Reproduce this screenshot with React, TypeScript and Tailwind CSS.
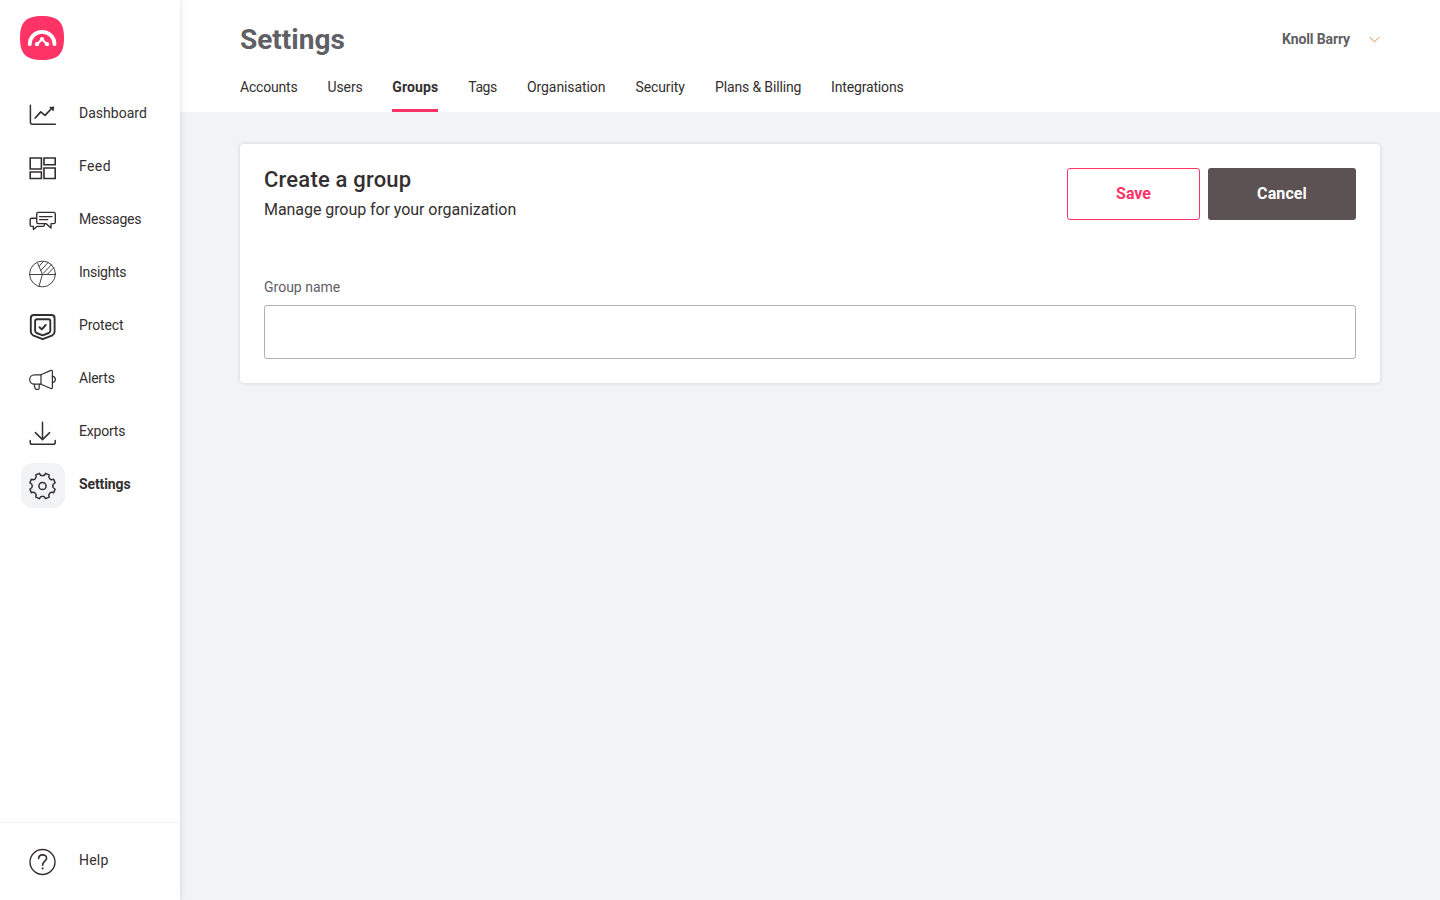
import type { ReactNode } from 'react';

const navItems = [
  { label: 'Dashboard', icon: <DashboardIcon />, tracking: 'tracking-[0.02px]' },
  { label: 'Feed', icon: <FeedIcon />, tracking: 'tracking-[0.4px]' },
  { label: 'Messages', icon: <MessagesIcon />, tracking: 'tracking-[-0.25px]' },
  { label: 'Insights', icon: <InsightsIcon />, tracking: 'tracking-[-0.28px]' },
  { label: 'Protect', icon: <ProtectIcon />, tracking: 'tracking-[-0.12px]' },
  { label: 'Alerts', icon: <AlertsIcon />, tracking: 'tracking-[-0.2px]' },
  { label: 'Exports', icon: <ExportsIcon />, tracking: 'tracking-[-0.2px]' },
  { label: 'Settings', icon: <SettingsIcon />, tracking: 'tracking-[-0.1px]', active: true },
];

const tabs = [
  { label: 'Accounts', width: 'w-[57.5px] tracking-[-0.2px]' },
  { label: 'Users', width: 'w-[34.8px] tracking-[-0.1px]' },
  { label: 'Groups', width: 'w-[46px] tracking-[0.12px]', active: true },
  { label: 'Tags', width: 'w-[28.7px] tracking-[-0.45px]' },
  { label: 'Organisation', width: 'w-[78.5px] tracking-[-0.08px]' },
  { label: 'Security', width: 'w-[49.5px] tracking-[-0.1px]' },
  { label: 'Plans & Billing', width: 'w-[86px] tracking-[-0.14px]' },
  { label: 'Integrations', width: 'w-[73px] tracking-[-0.15px]' },
];

function Icon({ children, stroke = 1.2 }: { children: ReactNode; stroke?: number }) {
  return (
    <svg
      width="44"
      height="45"
      viewBox="0 0 44 45"
      fill="none"
      stroke="#332f30"
      strokeWidth={stroke}
      strokeLinecap="round"
      strokeLinejoin="round"
    >
      {children}
    </svg>
  );
}

function DashboardIcon() {
  return (
    <Icon stroke={1.5}>
      <path d="M9.4 13.2V30.2Q9.4 32.2 11.4 32.2H34.3" />
      <path d="M14.2 26L19.7 19.9L24 23.3L31 16" strokeWidth="1.7" />
      <path d="M28 15L33.2 14.4L32.6 19.4Z" fill="#332f30" stroke="none" />
    </Icon>
  );
}

function FeedIcon() {
  return (
    <Icon stroke={1.6}>
      <path d="M9.2 13H20.4V24H9.2ZM23 13H34.2V19.8H23ZM9.2 27H20.4V33.5H9.2ZM23 23H34.2V33.5H23Z" strokeLinejoin="miter" />
    </Icon>
  );
}

function MessagesIcon() {
  return (
    <Icon stroke={1.4}>
      <path d="M17.3 14.4H32.7Q34.3 14.4 34.3 16V24Q34.3 25.6 32.7 25.6H30V30L25 25.6H17.3Q15.7 25.6 15.7 24V16Q15.7 14.4 17.3 14.4Z" />
      <path d="M18.6 18.6H31M18.6 21.6H26.8" />
      <path d="M15 20.2H10.6Q9.2 20.2 9.2 21.6V27Q9.2 28.4 10.6 28.4H12.4V31.6L16 28.4H22Q23.4 28.4 23.4 26.5" />
    </Icon>
  );
}

function InsightsIcon() {
  return (
    <Icon stroke={0.9}>
      <circle cx="21.5" cy="23" r="12.9" />
      <path d="M8.6 23.5H34.4M21.4 23.3L16.6 12.2M21.4 23.3L18 35.5" />
      <path d="M18.2 15.2L22.2 10.6M19.8 19.4L27.2 11.4M22.4 22.2L30.6 13.6M27 22.8L33 16.4" />
    </Icon>
  );
}

function ProtectIcon() {
  return (
    <Icon stroke={1.9}>
      <path d="M13 11H30.4Q33.6 11 33.6 14.2V27.5Q33.6 30 31.4 31.3L21.7 35.2L12 31.3Q9.8 30 9.8 27.5V14.2Q9.8 11 13 11Z" />
      <path d="M16 15.2H27.4Q29.3 15.2 29.3 17.2V26.5Q29.3 28.2 27.8 29L21.7 31.3L15.6 29Q14.1 28.2 14.1 26.5V17.2Q14.1 15.2 16 15.2Z" />
      <path d="M18.5 23.2L20.8 25.4L24.7 21" />
    </Icon>
  );
}

function AlertsIcon() {
  return (
    <Icon stroke={1.2}>
      <path d="M20 17.8H13.4A4.7 4.7 0 0 0 13.4 27.2H20Z" />
      <path d="M20 17.8L29.8 13.4Q31.4 12.9 31.4 14.4V30.5Q31.4 32 29.8 31.5L20 27.2" />
      <path d="M31.4 19.2C35.4 20.2 35.4 24.8 31.4 25.8" />
      <path d="M13.2 27.4L14 31.2Q14.2 32.4 15.4 32.4H17Q18.2 32.4 18.2 31.2V27.4" />
    </Icon>
  );
}

function ExportsIcon() {
  return (
    <Icon stroke={1.5}>
      <path d="M21.5 12.2V29.6M14.4 22.6L21.5 29.6L28.6 22.6" />
      <path d="M9.2 30.4V32.4Q9.2 34.2 11 34.2H32.4Q34.2 34.2 34.2 32.4V30.4" />
    </Icon>
  );
}

function gearPath(cx: number, cy: number) {
  const at = (r: number, deg: number) => {
    const a = (deg * Math.PI) / 180;
    return `${(cx + r * Math.cos(a)).toFixed(2)} ${(cy + r * Math.sin(a)).toFixed(2)}`;
  };
  let d = `M${at(13, 14)}`;
  for (let i = 0; i < 8; i++) {
    const mid = i * 45 + 22.5;
    d += `L${at(13, mid + 8.5)}`;
    d += `C${at(9.6, mid + 11)} ${at(9.6, mid + 34)} ${at(13, mid + 36.5)}`;
  }
  return d + 'Z';
}

function SettingsIcon() {
  return (
    <Icon stroke={1.5}>
      <path d={gearPath(21.5, 23)} />
      <circle cx="21.5" cy="23" r="3.6" />
    </Icon>
  );
}

function HelpIcon() {
  return (
    <Icon stroke={1.4}>
      <circle cx="21.5" cy="23" r="12.5" />
      <path d="M17.6 19.6C17.6 14.6 25.6 14.8 25.6 19.2C25.6 22.2 21.6 22.2 21.6 26.2" strokeWidth="1.6" />
      <path d="M21.6 29.3V29.5" strokeWidth="1.9" />
    </Icon>
  );
}

function Logo() {
  return (
    <svg width="44" height="44" viewBox="0 0 44 44" fill="none">
      <path
        d="M22 0C38 0 44 6 44 22S38 44 22 44S0 38 0 22S6 0 22 0Z"
        fill="#ff3366"
      />
      <path d="M9.7 28.2A12.4 12.4 0 0 1 34.5 28.2" stroke="#fff" strokeWidth="3.8" strokeLinecap="round" />
      <path d="M17 28.2L22 23.2L27 28.2" stroke="#fff" strokeWidth="2.2" />
      <circle cx="17" cy="28.2" r="2.1" fill="#fff" />
      <circle cx="22" cy="23.2" r="2.1" fill="#fff" />
      <circle cx="27" cy="28.2" r="2.1" fill="#fff" />
    </svg>
  );
}

function Sidebar() {
  return (
    <aside className="z-10 flex w-[180px] shrink-0 flex-col bg-white shadow-[0_0_6px_rgba(0,0,0,0.14)]">
      <div className="h-[92px] pt-4 pl-5">
        <Logo />
      </div>
      <nav className="flex flex-1 flex-col gap-2 pl-[21px]">
        {navItems.map((item) => (
          <a key={item.label} href="#" className="flex h-[45px] items-center gap-3.5">
            <span className={item.active ? 'rounded-xl bg-[#f2f3f5]' : ''}>{item.icon}</span>
            <span className={`pb-[3px] ${item.tracking} ${item.active ? 'font-bold' : ''}`}>
              {item.label}
            </span>
          </a>
        ))}
      </nav>
      <div className="h-[78px] border-t border-[#f2f3f5] pt-4 pl-[21px]">
        <a href="#" className="flex h-[45px] items-center gap-3.5">
          <HelpIcon />
          <span className="pb-[3px] tracking-[0.2px]">Help</span>
        </a>
      </div>
    </aside>
  );
}

function Header() {
  return (
    <header className="h-28 bg-white px-[60px]">
      <div className="flex h-[72px] items-center justify-between pt-2">
        <h1 className="text-[28px] leading-8 font-bold text-[#5f6065]">Settings</h1>
        <button className="-mt-0.5 flex items-center gap-[19px] font-bold tracking-[-0.12px] text-[#5f6065]">
          Knoll Barry
          <svg className="mt-px" width="11" height="7" viewBox="0 0 11 7" fill="none" stroke="#e08a55" strokeWidth="1">
            <path d="M0.5 0.8L5.5 5.8L10.5 0.8" />
          </svg>
        </button>
      </div>
      <nav className="flex h-10 gap-[30px]">
        {tabs.map((tab) => (
          <a
            key={tab.label}
            href="#"
            className={`h-10 pt-[5px] whitespace-nowrap ${tab.width} ${
              tab.active ? 'border-b-3 border-[#ff3366] font-bold' : ''
            }`}
          >
            {tab.label}
          </a>
        ))}
      </nav>
    </header>
  );
}

export default function App() {
  return (
    <div className="flex h-screen overflow-hidden bg-[#f2f3f5] font-['Roboto',sans-serif] text-sm text-[#332f30]">
      <Sidebar />
      <div className="flex-1">
        <Header />
        <main className="px-[60px] pt-8">
          <section className="h-[239px] rounded bg-white p-6 shadow-[0_0_4px_rgba(0,0,0,0.14)]">
            <div className="flex justify-between">
              <div>
                <h2 className="text-[22px] leading-6 font-medium tracking-[0.2px]">Create a group</h2>
                <p className="mt-1.5 text-base tracking-[-0.06px]">Manage group for your organization</p>
              </div>
              <div className="flex gap-2 text-base font-bold">
                <button className="h-[52px] w-[133px] rounded-[3px] border border-[#ff3366] text-[#ff3366]">
                  Save
                </button>
                <button className="h-[52px] w-[148px] rounded-[3px] bg-[#5c5254] tracking-[0.1px] text-white">
                  Cancel
                </button>
              </div>
            </div>
            <label className="mt-[55px] block text-[#5f6065]">
              Group name
              <input
                type="text"
                className="mt-2 block h-[54px] w-full rounded-[3px] border border-[#b0b1b3] px-4 outline-none"
              />
            </label>
          </section>
        </main>
      </div>
    </div>
  );
}
